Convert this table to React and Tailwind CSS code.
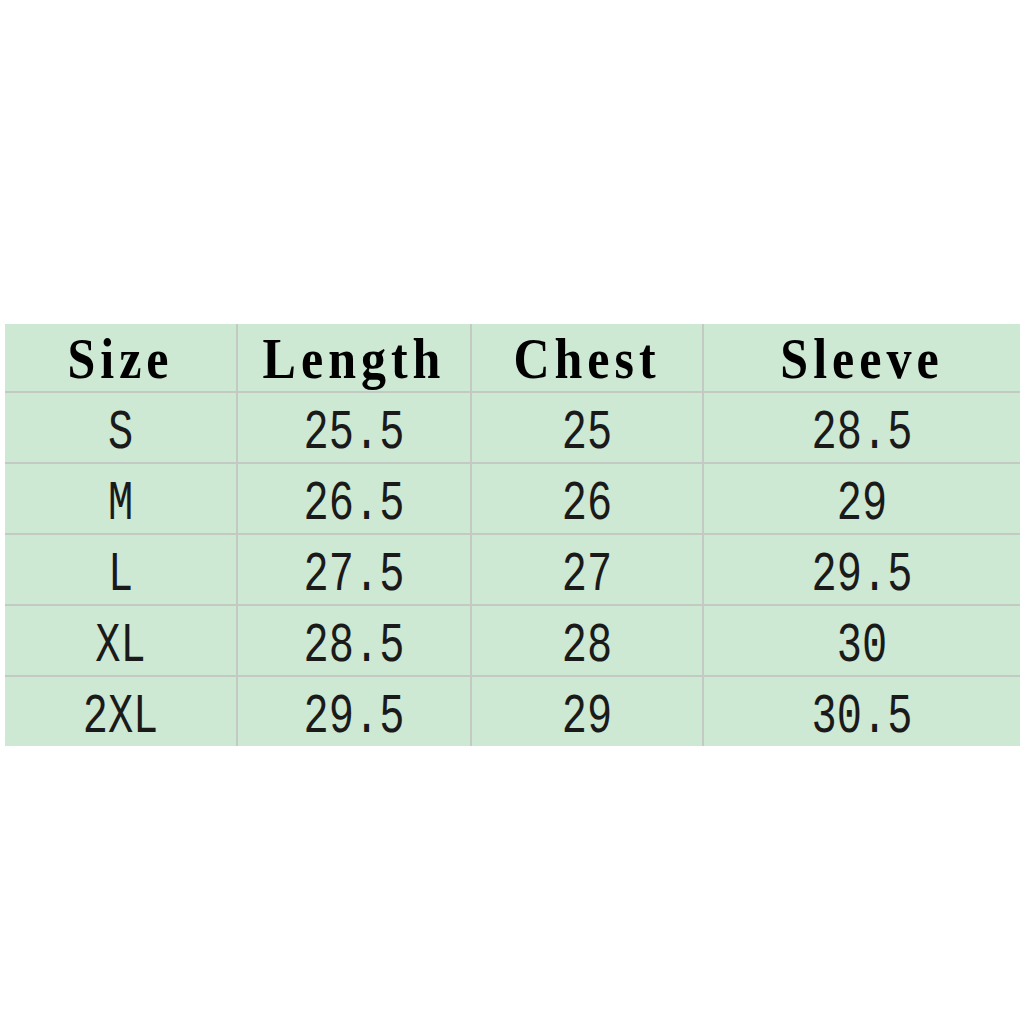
const headers = ['Size', 'Length', 'Chest', 'Sleeve'];

const rows = [
  ['S', '25.5', '25', '28.5'],
  ['M', '26.5', '26', '29'],
  ['L', '27.5', '27', '29.5'],
  ['XL', '28.5', '28', '30'],
  ['2XL', '29.5', '29', '30.5'],
];

export default function App() {
  return (
    <div className="min-h-screen w-[1024px] h-[1024px] bg-white pt-[324px] pl-[5px]">
      <div className="grid w-[1015px] grid-cols-[231px_232px_230px_316px] gap-[2px] bg-[#c2cac3]">
        {headers.map((h) => (
          <div key={h} className="flex h-[67px] items-center justify-center bg-[#cde8d3] pt-[2px]">
            <span className="inline-block scale-y-[1.12] font-['Liberation_Serif',serif] text-[50px] font-bold leading-none tracking-[5px] text-black">
              {h}
            </span>
          </div>
        ))}
        {rows.map((r) =>
          r.map((c, i) => (
            <div key={r[0] + i} className="flex h-[69px] items-center justify-center bg-[#cde8d3] pt-[12px]">
              <span className="inline-block scale-y-[1.3] font-['Liberation_Mono',monospace] text-[42px] leading-none text-[#1a1a1a]">
                {c}
              </span>
            </div>
          ))
        )}
      </div>
    </div>
  );
}
